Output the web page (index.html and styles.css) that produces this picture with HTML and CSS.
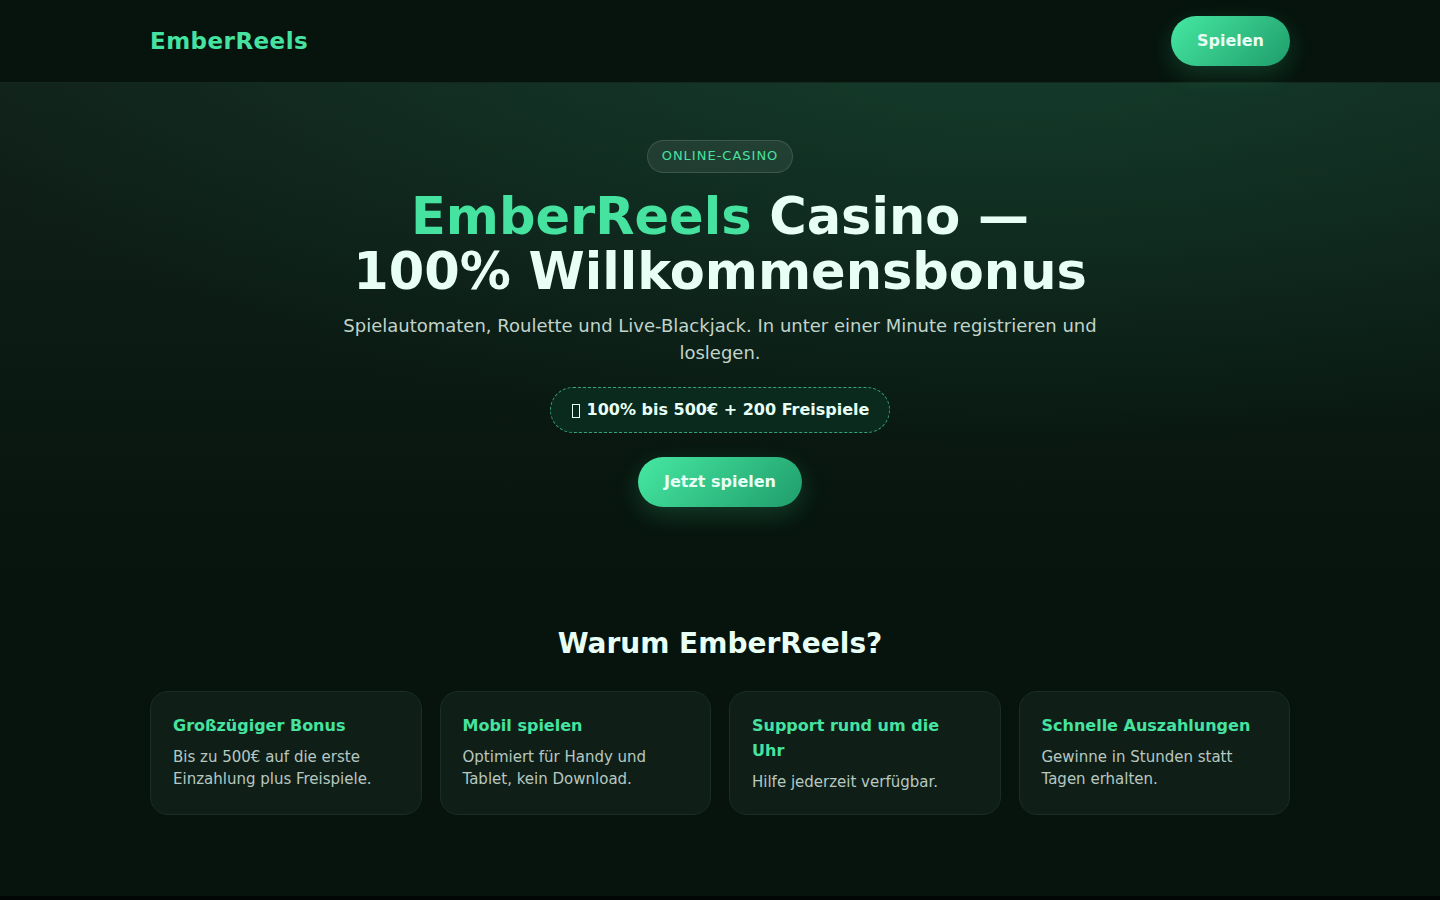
FILE: index.html
```html
<!DOCTYPE html>
<html lang="de">
<head>
<meta charset="utf-8">
<meta name="viewport" content="width=device-width, initial-scale=1">
<title>EmberReels Casino</title>
<link rel="stylesheet" href="styles.css">
</head>
<body>
<header class="header">
  <div class="container header-inner">
    <div class="logo">EmberReels</div>
    <button class="btn" type="button">Spielen</button>
  </div>
</header>
<main>
  <section class="hero">
    <span class="badge">Online-Casino</span>
    <h1 class="title"><span class="accent">EmberReels</span> Casino — 100% Willkommensbonus</h1>
    <p class="lead">Spielautomaten, Roulette und Live-Blackjack. In unter einer Minute registrieren und loslegen.</p>
    <div class="bonus"><span class="tofu"></span>100% bis 500€ + 200 Freispiele</div>
    <button class="btn" type="button">Jetzt spielen</button>
  </section>
  <section class="features container">
    <h2 class="heading">Warum EmberReels?</h2>
    <div class="grid">
      <article class="card"><h3>Großzügiger Bonus</h3><p>Bis zu 500€ auf die erste Einzahlung plus Freispiele.</p></article>
      <article class="card"><h3>Mobil spielen</h3><p>Optimiert für Handy und Tablet, kein Download.</p></article>
      <article class="card"><h3>Support rund um die Uhr</h3><p>Hilfe jederzeit verfügbar.</p></article>
      <article class="card"><h3>Schnelle Auszahlungen</h3><p>Gewinne in Stunden statt Tagen erhalten.</p></article>
    </div>
  </section>
</main>
<footer class="footer"></footer>
</body>
</html>
```
FILE: styles.css
```css
* { box-sizing: border-box; margin: 0; }
body {
  background: #06140d;
  color: #e8fff5;
  font: 16px/25px "DejaVu Sans", sans-serif;
}
.container { width: 100%; max-width: 1180px; margin: 0 auto; padding: 0 20px; }
.header { border-bottom: 1px solid #14281f; background: #06140d; }
.header-inner { display: flex; align-items: center; justify-content: space-between; padding-top: 16px; padding-bottom: 16px; }
.logo { color: #46e3a0; font-size: 23px; font-weight: 700; letter-spacing: 0.02em; }
.btn {
  border: 0;
  border-radius: 999px;
  padding: 12px 26px 13px;
  background: linear-gradient(135deg, #46e8a2, #1f9d6b);
  box-shadow: 0 8px 24px rgba(70, 232, 162, 0.18);
  color: #e8fff5;
  font: 700 16px/25px "DejaVu Sans", sans-serif;
  cursor: pointer;
}
.hero {
  display: flex;
  flex-direction: column;
  align-items: center;
  padding: 57px 20px 70px;
  text-align: center;
  background:
    radial-gradient(1100px 420px at 70% -10%, rgba(31, 157, 107, 0.22), transparent),
    linear-gradient(180deg, #11211a, #06140d);
}
.badge {
  border: 1px solid rgba(255, 255, 255, 0.13);
  border-radius: 999px;
  padding: 5px 14px 6px;
  background: rgba(255, 255, 255, 0.07);
  color: #46e3a0;
  font-size: 13px;
  line-height: 20px;
  letter-spacing: 1px;
  text-transform: uppercase;
}
.title { max-width: 760px; margin-top: 16px; font-size: 51px; line-height: 55px; }
.accent { color: #46e3a0; }
.lead { max-width: 760px; margin-top: 13px; color: #c1d4cb; font-size: 18px; line-height: 27px; }
.bonus {
  display: flex;
  align-items: center;
  margin: 21px 0 24px;
  border: 1px dashed #36a478;
  border-radius: 999px;
  padding: 9px 20px 10px;
  background: #0b2a1e;
  font-weight: 700;
}
.tofu { width: 8px; height: 14px; margin: 3px 7px 0 1px; border: 1px solid #e8fff5; }
.features { padding-top: 49px; padding-bottom: 81px; }
.heading { margin-bottom: 29px; text-align: center; font-size: 28px; line-height: 36px; }
.grid { display: grid; grid-template-columns: repeat(4, 1fr); gap: 18px; }
.card { border: 1px solid #1a2e24; border-radius: 18px; padding: 21px 24px 21px 22px; background: #0f1f18; }
.card h3 { margin-bottom: 8px; color: #46e3a0; font-size: 16px; line-height: 25px; }
.card p { color: #b7c8c0; font-size: 15px; line-height: 22px; }
.footer { height: 4px; background: #020604; }
@media (max-width: 900px) { .grid { grid-template-columns: repeat(2, 1fr); } }
```
